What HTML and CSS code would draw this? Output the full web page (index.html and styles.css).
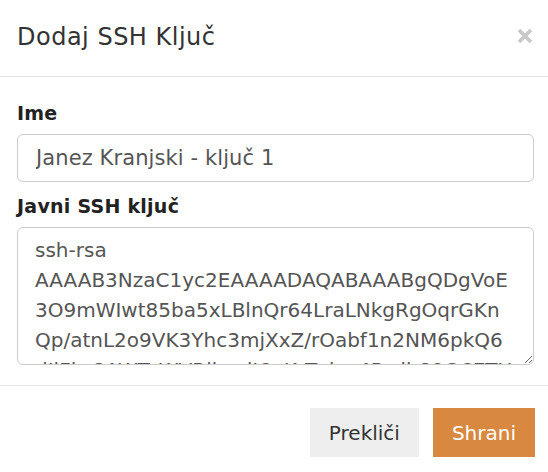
FILE: index.html
```html
<!DOCTYPE html>
<html lang="sl">
<head>
    <meta charset="UTF-8">
    <meta name="viewport" content="width=device-width, initial-scale=1.0">
    <title>Dodaj SSH Ključ</title>
    <link rel="stylesheet" href="styles.css">
</head>
<body>
    <div class="modal">
        <div class="modal-header">
            <h4 class="modal-title">Dodaj SSH Ključ</h4>
            <button class="close" type="button" aria-label="Zapri">
                <svg width="16" height="16" viewBox="0 0 16 16">
                    <path d="M2 2 L14 14 M14 2 L2 14" stroke="currentColor" stroke-width="3.8" stroke-linecap="butt"/>
                </svg>
            </button>
        </div>
        <div class="modal-body">
            <div class="form-group">
                <label for="name">Ime</label>
                <input type="text" id="name" class="form-control" value="Janez Kranjski - ključ 1">
            </div>
            <div class="form-group">
                <label for="key">Javni SSH ključ</label>
                <textarea id="key" class="form-control key-area">ssh-rsa
AAAAB3NzaC1yc2EAAAADAQABAAABgQDgVoE
3O9mWIwt85ba5xLBlnQr64LraLNkgRgOqrGKn
Qp/atnL2o9VK3Yhc3mjXxZ/rOabf1n2NM6pkQ6
dIiFjw8AWTeWVRjkwdJ6pKrTvbw4Pzdh89O6ETU</textarea>
            </div>
        </div>
        <div class="modal-footer">
            <button type="button" class="btn btn-default">Prekliči</button>
            <button type="button" class="btn btn-primary">Shrani</button>
        </div>
    </div>
</body>
</html>
```

FILE: styles.css
```css
body {
    margin: 0;
    background: #ffffff;
    font-family: 'DejaVu Sans', 'Liberation Sans', sans-serif;
    color: #333333;
}
.modal {
    background: #ffffff;
}
.modal-header {
    display: flex;
    align-items: center;
    justify-content: space-between;
    padding: 19px 15px 21px 17px;
    border-bottom: 1px solid #e5e5e5;
}
.modal-title {
    margin: 0;
    font-size: 24px;
    font-weight: 400;
    line-height: 36px;
    letter-spacing: 0.5px;
    color: #333333;
}
.close {
    padding: 0;
    border: none;
    background: none;
    color: #c8c8c8;
    display: flex;
    margin-top: -3px;
}
.modal-body {
    padding: 24px 14px 20px 17px;
}
.form-group {
    margin-bottom: 12px;
}
.form-group:last-child {
    margin-bottom: 0;
}
label {
    display: block;
    font-size: 19px;
    font-weight: 700;
    line-height: 24px;
    letter-spacing: 0.25px;
    color: #222222;
    margin-bottom: 9px;
}
.form-control {
    display: block;
    box-sizing: border-box;
    width: 100%;
    border: 1px solid #cccccc;
    border-radius: 6px;
    font-family: inherit;
    color: #555555;
    background: #ffffff;
    margin: 0;
}
input.form-control {
    height: 48px;
    padding: 0 18px;
    font-size: 21px;
    letter-spacing: 0.1px;
}
.key-area {
    height: 138px;
    padding: 7px 17px;
    font-size: 20px;
    line-height: 30px;
    resize: vertical;
    overflow: hidden;
}
.modal-footer {
    display: flex;
    justify-content: flex-end;
    gap: 14px;
    padding: 22px 13px 15px 17px;
    border-top: 1px solid #e5e5e5;
}
.btn {
    height: 49px;
    padding: 0 19px;
    border: none;
    border-radius: 0;
    font-family: inherit;
    font-size: 20px;
}
.btn-default {
    background: #eeeeee;
    color: #333333;
}
.btn-primary {
    background: #d9883f;
    color: #ffffff;
}
```
